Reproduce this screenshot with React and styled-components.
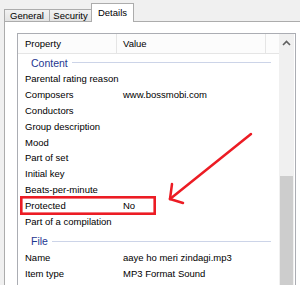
import React from 'react';
import styled, { createGlobalStyle } from 'styled-components';

const GlobalStyle = createGlobalStyle`
  html, body {
    margin: 0;
    padding: 0;
    background: #f0f0f0;
    overflow: hidden;
  }
  body {
    font-family: "Liberation Sans", Arial, sans-serif;
    font-size: 9.5px;
    color: #000;
  }
`;

const Window = styled.div`
  position: relative;
  width: 300px;
  height: 285px;
  overflow: hidden;
`;

const TabStrip = styled.div`
  display: flex;
  align-items: flex-end;
  height: 21px;
  padding-left: 4px;
`;

const Tab = styled.div`
  box-sizing: border-box;
  width: ${(p) => p.$w}px;
  height: ${(p) => (p.$active ? 19 : 12)}px;
  margin-left: ${(p) => (p.$first ? 0 : -1)}px;
  margin-bottom: ${(p) => (p.$active ? -1 : 0)}px;
  border: 1px solid #acacac;
  border-bottom: none;
  background: ${(p) => (p.$active ? '#fff' : 'linear-gradient(#f2f2f2, #e3e3e3)')};
  display: flex;
  align-items: ${(p) => (p.$active ? 'flex-start' : 'center')};
  padding-top: ${(p) => (p.$active ? 3 : 0)}px;
  justify-content: center;
  line-height: 11px;
  position: relative;
  z-index: ${(p) => (p.$active ? 2 : 1)};
`;

const Panel = styled.div`
  margin-left: 4px;
  height: 264px;
  background: #fff;
  border-top: 1px solid #acacac;
  border-left: 1px solid #acacac;
  padding: 11px 0 0 12px;
  box-sizing: border-box;
`;

const List = styled.div`
  box-sizing: border-box;
  width: 279px;
  height: 260px;
  border: 1px solid #abadb3;
  border-bottom: none;
  display: flex;
  overflow: hidden;
`;

const Body = styled.div`
  flex: 1;
  display: flex;
  flex-direction: column;
`;

const Header = styled.div`
  display: flex;
  height: 20px;
  flex-shrink: 0;
  background: #fcfcfc;
  border-bottom: 1px solid #e5e5e5;
  box-sizing: border-box;
`;

const HeadCell = styled.div`
  box-sizing: border-box;
  width: ${(p) => p.$w}px;
  flex: ${(p) => (p.$w ? 'none' : 1)};
  padding-left: ${(p) => p.$pad || 0}px;
  border-right: ${(p) => (p.$w ? '1px solid #e5e5e5' : 'none')};
  line-height: 19px;
`;

const Group = styled.div`
  display: flex;
  align-items: center;
  gap: 4px;
  height: 17px;
  flex-shrink: 0;
  margin-top: ${(p) => p.$top || 0}px;
  padding-left: 13px;
  padding-right: 8px;
  color: #1e3791;
  font-size: 10.5px;
`;

const GroupLine = styled.div`
  flex: 1;
  height: 1px;
  background: #ccd4e8;
`;

const Row = styled.div`
  display: flex;
  height: 15.9px;
  flex-shrink: 0;
  line-height: 15.9px;
  white-space: nowrap;
`;

const Cell = styled.div`
  box-sizing: border-box;
  width: ${(p) => p.$w}px;
  padding-left: ${(p) => p.$pad}px;
`;

const ScrollBar = styled.div`
  width: 15px;
  flex-shrink: 0;
  background: #f0f0f0;
  display: flex;
  flex-direction: column;
  margin-right: 1px;
`;

const ScrollArrow = styled.div`
  height: 17px;
  display: flex;
  align-items: center;
  justify-content: center;
`;

const ScrollTrack = styled.div`
  flex: 1;
  display: flex;
  flex-direction: column;
  padding-top: 125px;
`;

const Thumb = styled.div`
  flex: 1;
  margin: 0 1px;
  background: #cdcdcd;
`;

const Overlay = styled.svg`
  position: absolute;
  left: 0;
  top: 0;
  pointer-events: none;
  z-index: 5;
`;

const content = [
  ['Parental rating reason', ''],
  ['Composers', 'www.bossmobi.com'],
  ['Conductors', ''],
  ['Group description', ''],
  ['Mood', ''],
  ['Part of set', ''],
  ['Initial key', ''],
  ['Beats-per-minute', ''],
  ['Protected', 'No'],
  ['Part of a compilation', ''],
];

const file = [
  ['Name', 'aaye ho meri zindagi.mp3'],
  ['Item type', 'MP3 Format Sound'],
];

const Rows = ({ items }) =>
  items.map(([name, value]) => (
    <Row key={name}>
      <Cell $w={99} $pad={7}>{name}</Cell>
      <Cell $w={150} $pad={6}>{value}</Cell>
    </Row>
  ));

export default function App() {
  return (
    <Window>
      <GlobalStyle />
      <TabStrip>
        <Tab $w={46} $first>General</Tab>
        <Tab $w={43}>Security</Tab>
        <Tab $w={43} $active>Details</Tab>
      </TabStrip>
      <Panel>
        <List>
          <Body>
            <Header>
              <HeadCell $w={99} $pad={7}>Property</HeadCell>
              <HeadCell $w={149} $pad={6}>Value</HeadCell>
              <HeadCell />
            </Header>
            <Group>
              Content
              <GroupLine />
            </Group>
            <Rows items={content} />
            <Group $top={3}>
              File
              <GroupLine />
            </Group>
            <Rows items={file} />
          </Body>
          <ScrollBar>
            <ScrollArrow>
              <svg width="9" height="6" viewBox="0 0 9 6">
                <path d="M1 5 L4.5 1.5 L8 5" fill="none" stroke="#606060" strokeWidth="1.6" />
              </svg>
            </ScrollArrow>
            <ScrollTrack>
              <Thumb />
            </ScrollTrack>
          </ScrollBar>
        </List>
      </Panel>
      <Overlay width="300" height="285" viewBox="0 0 300 285">
        <rect x="21.3" y="197.3" width="133.4" height="16.4" fill="none" stroke="#ec1c24" strokeWidth="2.6" />
        <g stroke="#ec1c24" strokeWidth="2.5" strokeLinecap="round" fill="none">
          <line x1="251" y1="134" x2="170" y2="199" />
          <line x1="170" y1="199" x2="172" y2="184" />
          <line x1="170" y1="199" x2="183" y2="203" />
        </g>
      </Overlay>
    </Window>
  );
}
